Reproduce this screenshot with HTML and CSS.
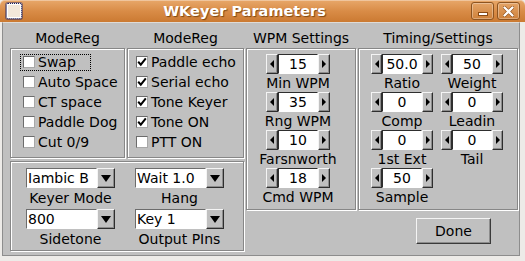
FILE: index.html
```html
<!DOCTYPE html>
<html>
<head>
<meta charset="utf-8">
<link rel="stylesheet" href="styles.css">
</head>
<body>
<div class="titlebar">
  <div class="ticon"></div>
  <div class="title">WKeyer Parameters</div>
  <div class="tbtns">
    <div class="tbtn"><span class="minbar"></span></div>
    <div class="tbtn"><svg width="11" height="11" viewBox="0 0 11 11"><path d="M1.5 1.5L9.5 9.5M9.5 1.5L1.5 9.5" stroke="#8a4a14" stroke-width="3.4" stroke-linecap="round"/><path d="M1.5 1.5L9.5 9.5M9.5 1.5L1.5 9.5" stroke="#fff" stroke-width="2.4" stroke-linecap="round"/></svg></div>
  </div>
</div>
<div class="client">
  <div class="left">
    <div class="heads">
      <div class="head h1">ModeReg</div>
      <div class="head h2">ModeReg</div>
    </div>
    <div class="groups">
      <div class="box g1">
        <div class="cb focus"><span class="chk"></span>Swap</div>
        <div class="cb"><span class="chk"></span>Auto Space</div>
        <div class="cb"><span class="chk"></span>CT space</div>
        <div class="cb"><span class="chk"></span>Paddle Dog</div>
        <div class="cb"><span class="chk"></span>Cut 0/9</div>
      </div>
      <div class="box g2">
        <div class="cb"><span class="chk"><svg class="tick" width="10" height="10" viewBox="0 0 10 10"><path d="M1.2 4.8L3.8 7.6L8.8 1.4" fill="none" stroke="#000" stroke-width="2"/></svg></span>Paddle echo</div>
        <div class="cb"><span class="chk"><svg class="tick" width="10" height="10" viewBox="0 0 10 10"><path d="M1.2 4.8L3.8 7.6L8.8 1.4" fill="none" stroke="#000" stroke-width="2"/></svg></span>Serial echo</div>
        <div class="cb"><span class="chk"><svg class="tick" width="10" height="10" viewBox="0 0 10 10"><path d="M1.2 4.8L3.8 7.6L8.8 1.4" fill="none" stroke="#000" stroke-width="2"/></svg></span>Tone Keyer</div>
        <div class="cb"><span class="chk"><svg class="tick" width="10" height="10" viewBox="0 0 10 10"><path d="M1.2 4.8L3.8 7.6L8.8 1.4" fill="none" stroke="#000" stroke-width="2"/></svg></span>Tone ON</div>
        <div class="cb"><span class="chk"></span>PTT ON</div>
      </div>
    </div>
    <div class="box g3">
      <div class="chcell">
        <div class="choice"><div class="cfield">Iambic B</div><div class="cbtn"><svg width="10" height="7" viewBox="0 0 10 7"><path d="M0 0H10L5 7Z"/></svg></div></div>
        <div class="lbl">Keyer Mode</div>
      </div>
      <div class="chcell">
        <div class="choice"><div class="cfield">Wait 1.0</div><div class="cbtn"><svg width="10" height="7" viewBox="0 0 10 7"><path d="M0 0H10L5 7Z"/></svg></div></div>
        <div class="lbl">Hang</div>
      </div>
      <div class="chcell">
        <div class="choice"><div class="cfield">800</div><div class="cbtn"><svg width="10" height="7" viewBox="0 0 10 7"><path d="M0 0H10L5 7Z"/></svg></div></div>
        <div class="lbl">Sidetone</div>
      </div>
      <div class="chcell">
        <div class="choice"><div class="cfield">Key 1</div><div class="cbtn"><svg width="10" height="7" viewBox="0 0 10 7"><path d="M0 0H10L5 7Z"/></svg></div></div>
        <div class="lbl">Output PIns</div>
      </div>
    </div>
  </div>

  <div class="col wpm">
    <div class="head">WPM Settings</div>
    <div class="box wbox">
      <div class="spin-item">
        <div class="spin"><div class="sbtn"><svg width="4" height="8" viewBox="0 0 4 8"><path d="M4 0V8L0 4Z"/></svg></div><div class="sfield">15</div><div class="sbtn"><svg width="4" height="8" viewBox="0 0 4 8"><path d="M0 0V8L4 4Z"/></svg></div></div>
        <div class="lbl">Min WPM</div>
      </div>
      <div class="spin-item">
        <div class="spin"><div class="sbtn"><svg width="4" height="8" viewBox="0 0 4 8"><path d="M4 0V8L0 4Z"/></svg></div><div class="sfield">35</div><div class="sbtn"><svg width="4" height="8" viewBox="0 0 4 8"><path d="M0 0V8L4 4Z"/></svg></div></div>
        <div class="lbl">Rng WPM</div>
      </div>
      <div class="spin-item">
        <div class="spin"><div class="sbtn"><svg width="4" height="8" viewBox="0 0 4 8"><path d="M4 0V8L0 4Z"/></svg></div><div class="sfield">10</div><div class="sbtn"><svg width="4" height="8" viewBox="0 0 4 8"><path d="M0 0V8L4 4Z"/></svg></div></div>
        <div class="lbl">Farsnworth</div>
      </div>
      <div class="spin-item">
        <div class="spin"><div class="sbtn"><svg width="4" height="8" viewBox="0 0 4 8"><path d="M4 0V8L0 4Z"/></svg></div><div class="sfield">18</div><div class="sbtn"><svg width="4" height="8" viewBox="0 0 4 8"><path d="M0 0V8L4 4Z"/></svg></div></div>
        <div class="lbl">Cmd WPM</div>
      </div>
    </div>
  </div>

  <div class="col timing">
    <div class="head">Timing/Settings</div>
    <div class="box tbox">
      <div class="spin-item">
        <div class="spin"><div class="sbtn"><svg width="4" height="8" viewBox="0 0 4 8"><path d="M4 0V8L0 4Z"/></svg></div><div class="sfield">50.0</div><div class="sbtn"><svg width="4" height="8" viewBox="0 0 4 8"><path d="M0 0V8L4 4Z"/></svg></div></div>
        <div class="lbl">Ratio</div>
      </div>
      <div class="spin-item">
        <div class="spin"><div class="sbtn"><svg width="4" height="8" viewBox="0 0 4 8"><path d="M4 0V8L0 4Z"/></svg></div><div class="sfield">50</div><div class="sbtn"><svg width="4" height="8" viewBox="0 0 4 8"><path d="M0 0V8L4 4Z"/></svg></div></div>
        <div class="lbl">Weight</div>
      </div>
      <div class="spin-item">
        <div class="spin"><div class="sbtn"><svg width="4" height="8" viewBox="0 0 4 8"><path d="M4 0V8L0 4Z"/></svg></div><div class="sfield">0</div><div class="sbtn"><svg width="4" height="8" viewBox="0 0 4 8"><path d="M0 0V8L4 4Z"/></svg></div></div>
        <div class="lbl">Comp</div>
      </div>
      <div class="spin-item">
        <div class="spin"><div class="sbtn"><svg width="4" height="8" viewBox="0 0 4 8"><path d="M4 0V8L0 4Z"/></svg></div><div class="sfield">0</div><div class="sbtn"><svg width="4" height="8" viewBox="0 0 4 8"><path d="M0 0V8L4 4Z"/></svg></div></div>
        <div class="lbl">Leadin</div>
      </div>
      <div class="spin-item">
        <div class="spin"><div class="sbtn"><svg width="4" height="8" viewBox="0 0 4 8"><path d="M4 0V8L0 4Z"/></svg></div><div class="sfield">0</div><div class="sbtn"><svg width="4" height="8" viewBox="0 0 4 8"><path d="M0 0V8L4 4Z"/></svg></div></div>
        <div class="lbl">1st Ext</div>
      </div>
      <div class="spin-item">
        <div class="spin"><div class="sbtn"><svg width="4" height="8" viewBox="0 0 4 8"><path d="M4 0V8L0 4Z"/></svg></div><div class="sfield">0</div><div class="sbtn"><svg width="4" height="8" viewBox="0 0 4 8"><path d="M0 0V8L4 4Z"/></svg></div></div>
        <div class="lbl">Tail</div>
      </div>
      <div class="spin-item">
        <div class="spin"><div class="sbtn"><svg width="4" height="8" viewBox="0 0 4 8"><path d="M4 0V8L0 4Z"/></svg></div><div class="sfield">50</div><div class="sbtn"><svg width="4" height="8" viewBox="0 0 4 8"><path d="M0 0V8L4 4Z"/></svg></div></div>
        <div class="lbl">Sample</div>
      </div>
    </div>
    <button class="done">Done</button>
  </div>
</div>
</body>
</html>
```
FILE: styles.css
```css
* { box-sizing: border-box; }
body {
  margin: 0;
  width: 525px;
  height: 261px;
  overflow: hidden;
  background: #edebe8;
  font-family: "DejaVu Sans", sans-serif;
  font-size: 14px;
  color: #000;
}
.titlebar {
  height: 22px;
  display: flex;
  align-items: center;
  background: linear-gradient(#e8a86a, #d98c47 50%, #cb7a32);
  border-radius: 5px 5px 0 0;
  box-shadow: inset 0 1px 0 rgba(255,255,255,0.35);
}
.ticon {
  width: 16px;
  height: 16px;
  margin-left: 6px;
  border: 1px dotted #16206a;
  border-radius: 2px;
  background: #f3e8da;
  box-shadow: inset 0 0 0 1px #fff, 0 0 0 1px rgba(22,32,106,0.45);
}
.title {
  flex: 1;
  text-align: center;
  color: #fff;
  font-weight: bold;
  font-size: 14.5px;
  padding-right: 4px;
  text-shadow: 1px 1px 1px rgba(90,45,0,0.7);
}
.tbtns { display: flex; gap: 3px; margin-right: 5px; }
.tbtn {
  width: 23px;
  height: 18px;
  border: 1px solid #8d5420;
  border-radius: 3px;
  background: linear-gradient(#e4a467, #cf823b);
  box-shadow: inset 0 0 0 1px rgba(255,255,255,0.3);
  display: flex;
  align-items: center;
  justify-content: center;
}
.minbar {
  width: 10px;
  height: 4px;
  margin-top: 6px;
  background: #fff;
  border: 1px solid #8a4a14;
}
.client {
  margin-left: 2px;
  width: 518px;
  height: 234px;
  background: #c0c0c0;
  border: 1px solid #8d8d8d;
  border-top: 1px solid #dedbd7;
  display: flex;
  gap: 2px;
  padding: 5px 0 0 7px;
}
.left { width: 234px; display: flex; flex-direction: column; }
.heads { display: flex; gap: 2px; }
.head { height: 20px; line-height: 20px; text-align: center; white-space: nowrap; }
.h1 { width: 115px; }
.h2 { width: 117px; }
.groups { display: flex; gap: 2px; }
.box {
  border: 1px solid #878787;
  box-shadow: inset 1px 1px 0 #fff, 1px 1px 0 #fff;
}
.g1 { width: 115px; height: 110px; padding: 3px 0 0 12px; }
.g2 { width: 117px; height: 110px; padding: 3px 0 0 8px; }
.cb {
  display: flex;
  align-items: center;
  height: 20px;
  white-space: nowrap;
  position: relative;
}
.chk {
  width: 12px;
  height: 12px;
  flex: none;
  margin-right: 3px;
  background: #fff;
  border: 1px solid;
  border-color: #6c6c6c #a8a8a8 #a8a8a8 #6c6c6c;
  display: flex;
  align-items: center;
  justify-content: center;
}
.focus::before {
  content: "";
  position: absolute;
  left: -3px;
  top: 2px;
  width: 69px;
  height: 15px;
  border: 1px dotted #000;
}
.g3 {
  width: 234px;
  height: 90px;
  margin-top: 3px;
  padding: 6px 0 0 15px;
  display: grid;
  grid-template-columns: 89px 89px;
  column-gap: 20px;
  align-content: start;
}
.chcell { display: flex; flex-direction: column; align-items: center; }
.choice { display: flex; width: 89px; height: 20px; }
.cfield {
  width: 71px;
  background: #fff;
  border: 1px solid;
  border-color: #6c6c6c #fff #fff #6c6c6c;
  padding-left: 1px;
  line-height: 18px;
  white-space: nowrap;
  overflow: hidden;
}
.cbtn {
  width: 18px;
  background: #c0c0c0;
  border: 1px solid;
  border-color: #f4f4f4 #2e2e2e #2e2e2e #f4f4f4;
  box-shadow: inset -1px -1px 0 #8c8c8c;
  display: flex;
  align-items: center;
  justify-content: center;
}
.lbl { height: 21px; line-height: 21px; white-space: nowrap; }
.col { display: flex; flex-direction: column; }
.wpm { width: 110px; }
.timing { width: 160px; }
.wbox {
  height: 162px;
  padding: 5px 0 0 19px;
  display: flex;
  flex-direction: column;
  align-items: flex-start;
}
.spin-item { display: flex; flex-direction: column; align-items: center; width: 64px; }
.spin-item .lbl { height: 18px; line-height: 18px; }
.spin { display: flex; width: 100%; height: 20px; }
.sbtn {
  width: 12px;
  flex: none;
  background: #c0c0c0;
  border: 1px solid;
  border-color: #f4f4f4 #2e2e2e #2e2e2e #f4f4f4;
  box-shadow: inset -1px -1px 0 #8c8c8c;
  display: flex;
  align-items: center;
  justify-content: center;
}
.sfield {
  flex: 1;
  background: #fff;
  border: 1px solid;
  border-color: #2e2e2e #fff #fff #2e2e2e;
  text-align: center;
  line-height: 18px;
}
.tbox {
  height: 162px;
  padding: 5px 0 0 12px;
  display: grid;
  grid-template-columns: 62px 62px;
  column-gap: 8px;
  align-content: start;
}
.tbox .spin-item { width: 62px; }
.tbox .sbtn { width: 11px; }
.done {
  margin: 8px 0 0 58px;
  width: 75px;
  height: 26px;
  padding: 0;
  font: inherit;
  color: #000;
  background: #c0c0c0;
  border: 1px solid;
  border-color: #f4f4f4 #3a3a3a #3a3a3a #f4f4f4;
  box-shadow: inset -1px -1px 0 #8c8c8c;
}
```
